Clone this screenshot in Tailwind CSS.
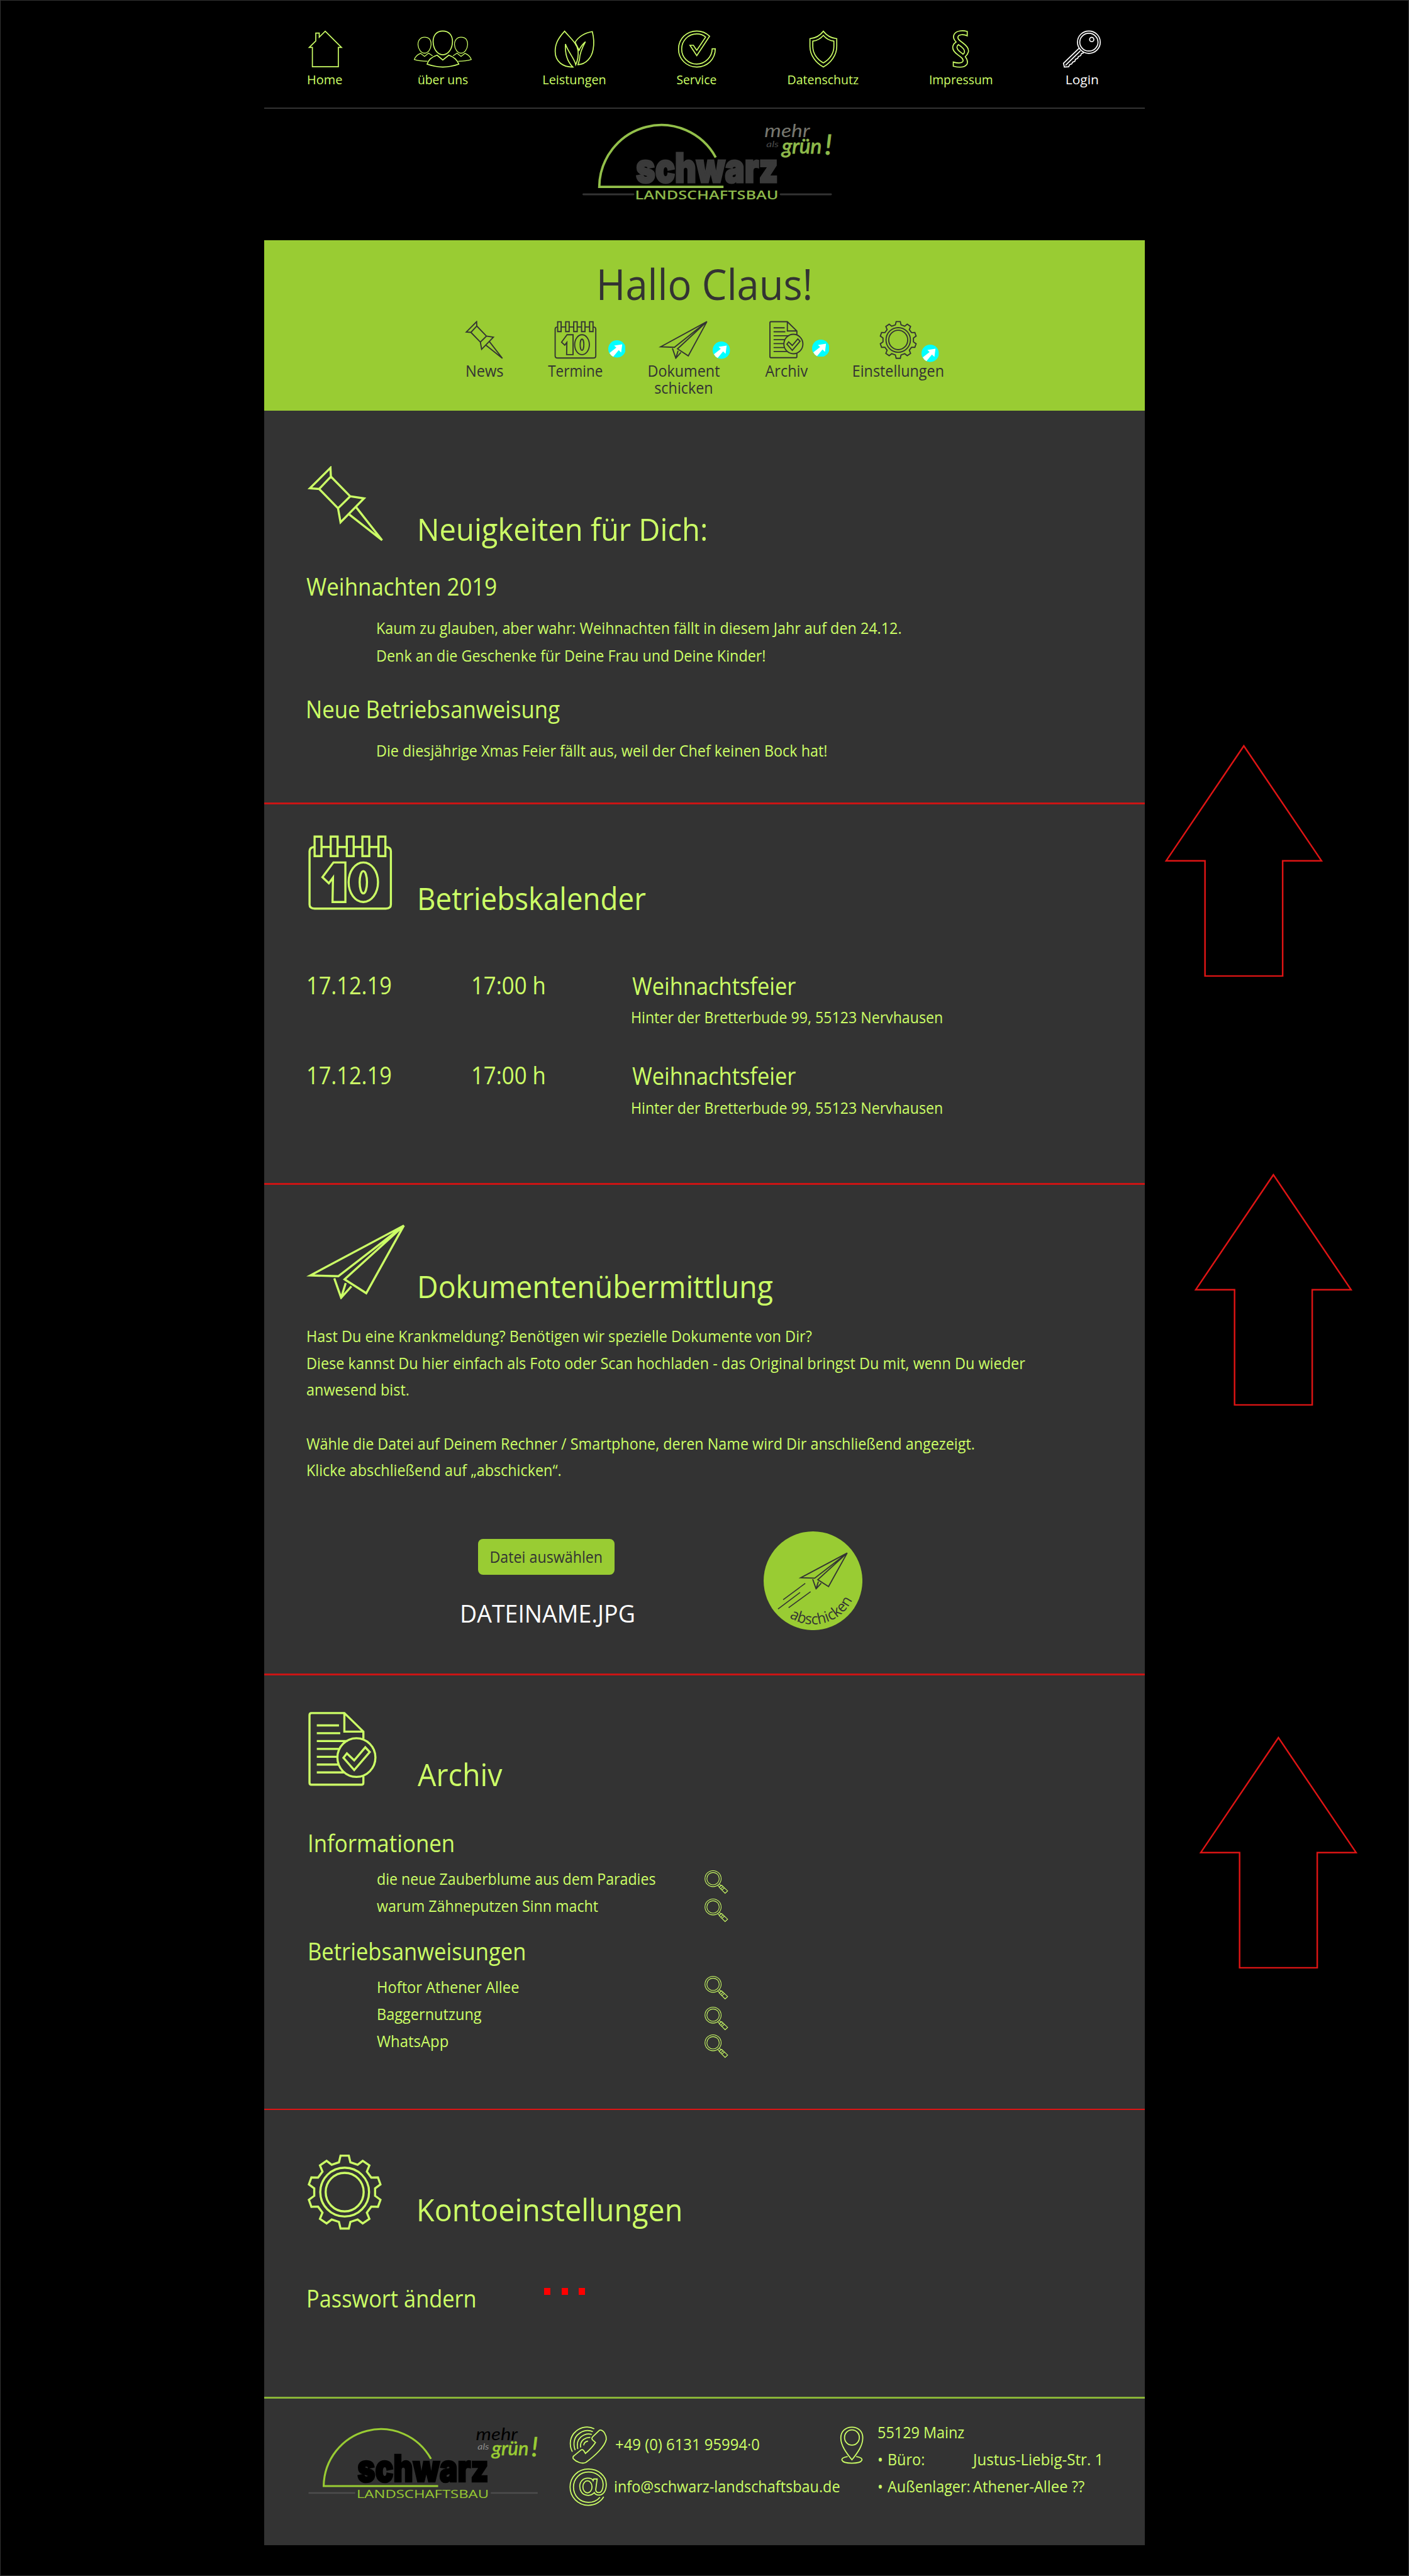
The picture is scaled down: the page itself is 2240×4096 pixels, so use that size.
<!DOCTYPE html>
<html lang="de">
<head>
<meta charset="utf-8">
<title>Schwarz Landschaftsbau – Mitarbeiterbereich</title>
<script src="https://cdn.jsdelivr.net/npm/@tailwindcss/browser@4"></script>
</head>
<body class="bg-black overflow-hidden">

<!-- Icon sprite -->
<svg class="hidden">
  <defs>
    <symbol id="pin" viewBox="108 80 185 330" preserveAspectRatio="none">
      <path vector-effect="non-scaling-stroke" d="M164 88 L165 126 L137 180 L115 177 Z M165 126 L211 212 L182 264 L137 180 M211 212 L244 221 L188 325 L182 264 M225 259 L287 403 L208 290"/>
    </symbol>
    <symbol id="calendar" viewBox="98 154 191 301" preserveAspectRatio="none">
      <path vector-effect="non-scaling-stroke" d="M115 203 Q105 205 105 220 V430 Q105 446 116 446 H271 Q282 446 282 430 V220 Q282 205 272 203 M116 162 H131 V239 H116 Z M151 162 H166 V239 H151 Z M186 162 H201 V239 H186 Z M220 162 H235 V239 H220 Z M255 162 H270 V239 H255 Z M131 203 H151 M166 203 H186 M201 203 H220 M235 203 H255"/>
      <path vector-effect="non-scaling-stroke" d="M157 264 H183 V420 H155 L156 324 L147 346 L133 322 Z"/>
      <ellipse vector-effect="non-scaling-stroke" cx="222" cy="342" rx="32" ry="78"/>
      <ellipse vector-effect="non-scaling-stroke" cx="222" cy="342" rx="8" ry="44"/>
    </symbol>
    <symbol id="plane" viewBox="78 212 178 366" preserveAspectRatio="none">
      <path vector-effect="non-scaling-stroke" d="M249 220 L85 461 L134 465 Z M249 220 L145 480 L183 547 Z M127 475 L139 569 L157 514 M147 498 L139 569"/>
    </symbol>
    <symbol id="doc" viewBox="144 179 223 292" preserveAspectRatio="none">
      <path vector-effect="non-scaling-stroke" d="M322 284 V257 L262 186 H158 Q152 186 152 194 V452 Q152 460 158 460 H316 Q322 460 322 452 V428 M262 186 V257 H322 M175 233 H245 M175 263 H249 M175 293 H272 M175 323 H245 M175 353 H239 M175 383 H243 M175 413 H262"/>
      <ellipse vector-effect="non-scaling-stroke" cx="300" cy="356" rx="60" ry="74"/>
      <path vector-effect="non-scaling-stroke" d="M259 357 L270 340 L293 367 L328 317 L342 335 L293 404 Z"/>
    </symbol>
    <symbol id="gear" viewBox="144 264 238 368" preserveAspectRatio="none">
      <path vector-effect="non-scaling-stroke" d="M276 272 L281 304 L304 316 L320 297 L341 319 L333 349 L347 378 L368 377 L376 411 L359 430 V466 L376 485 L368 519 L347 518 L333 547 L341 577 L320 599 L304 580 L281 592 L276 624 H250 L245 592 L222 580 L206 599 L185 577 L193 547 L179 518 L158 519 L150 485 L167 466 V430 L150 411 L158 377 L179 378 L193 349 L185 319 L206 297 L222 316 L245 304 L250 272 Z"/>
      <ellipse vector-effect="non-scaling-stroke" cx="263" cy="448" rx="77" ry="118"/>
      <ellipse vector-effect="non-scaling-stroke" cx="263" cy="448" rx="60" ry="93"/>
    </symbol>
    <symbol id="search" viewBox="1396 786 79 94" preserveAspectRatio="none">
      <ellipse vector-effect="non-scaling-stroke" cx="1425" cy="820" rx="25.5" ry="30.5"/>
      <ellipse vector-effect="non-scaling-stroke" cx="1425" cy="820" rx="19.5" ry="23.5"/>
      <path vector-effect="non-scaling-stroke" d="M1440 846 L1446 853 M1445 841 L1451 848 M1444 853 L1452 845 L1471 867 L1463 876 Z M1449 859 L1456 851 M1453 864 L1460 856"/>
    </symbol>
    <symbol id="badge" viewBox="0 0 28 28">
      <circle cx="14" cy="14" r="14" fill="#00ffff"/>
      <path d="M22.500 6.500 L9.500 8.500 L13 12 L2 20.500 Q4 24.500 8 26.500 L16.800 16 L20.800 19.800 Z" fill="#fff"/>
    </symbol>
    <symbol id="up" viewBox="0 0 256 376">
      <path d="M128 3 L3 188 H65.500 V373.500 H190.500 V188 H253 Z" fill="none" stroke="#dd1414" stroke-width="2.500"/>
    </symbol>
  </defs>
</svg>

<div class="relative w-[2268px] h-[4147px] [zoom:0.98765] border border-[#333333] bg-black overflow-hidden font-['Open_Sans',sans-serif] text-[#ccff66]">

  <div class="ml-[424px] w-[1418px]">

    <!-- Main navigation -->
    <nav class="h-[172px] pt-[47px] pl-[70.500px] flex items-start gap-[115.200px] whitespace-nowrap text-[21px] leading-[30px]">
      <a class="w-[55px] flex flex-col items-center">
        <svg class="w-[58.800px] h-[62.300px] shrink-0 fill-none stroke-current stroke-[1.700]" viewBox="160 144 128 187" preserveAspectRatio="none"><path vector-effect="non-scaling-stroke" d="M224 152 L281 230 H270 V324 H179 V230 H168 L191 199 V161 H203 V181 Z"/></svg>
        <span class="mt-[2.700px] scale-x-[.963]">Home</span>
      </a>
      <a class="w-[94px] flex flex-col items-center">
        <svg class="w-[99.600px] h-[62.300px] shrink-0 fill-none stroke-current stroke-[1.700]" viewBox="530 144 217 187" preserveAspectRatio="none"><path vector-effect="non-scaling-stroke" d="M638 151 C660 151 672 172 672 203 C671 238 657 266 638 266 C619 266 605 238 604 203 C604 172 616 151 638 151Z M618 268 Q590 280 583 311 Q610 324 638 325 Q668 324 694 311 Q685 280 659 268 L638 291 Z"/><path vector-effect="non-scaling-stroke" stroke-width="1.300" d="M574 181 C589 181 597 195 597 217 C596 240 586 258 574 258 C562 258 552 240 551 217 C551 195 560 181 574 181Z M702 181 C717 181 725 195 725 217 C724 240 714 258 702 258 C690 258 680 240 679 217 C679 195 688 181 702 181Z M584 297 Q556 297 538 289 Q543 268 560 259 L574 274 L588 258 L602 271 M692 297 Q720 297 738 289 Q733 268 716 259 L702 274 L688 258 L674 271"/></svg>
        <span class="mt-[3.500px] scale-x-[.931]">über uns</span>
      </a>
      <a class="w-[99.600px] flex flex-col items-center">
        <svg class="w-[69.800px] h-[62.300px] shrink-0 fill-none stroke-current stroke-[1.700]" viewBox="1024 144 152 187" preserveAspectRatio="none"><path vector-effect="non-scaling-stroke" d="M1065 152 C1040 190 1032 215 1032 250 C1032 300 1060 326 1094 325 C1075 300 1066 260 1068 214 C1076 250 1100 285 1104 314 C1112 290 1114 270 1112 245 C1108 210 1085 185 1065 152Z M1162 154 C1135 160 1112 180 1102 206 L1116 244 C1120 230 1128 215 1138 203 C1125 235 1118 260 1117 290 L1112 314 C1140 312 1160 280 1165 240 C1169 210 1168 185 1162 154Z"/></svg>
        <span class="mt-[2.700px] scale-x-[.957]">Leistungen</span>
      </a>
      <a class="w-[63.500px] flex flex-col items-center">
        <svg class="w-[64.700px] h-[62.300px] shrink-0 fill-none stroke-current stroke-[1.700]" viewBox="1457 144 141 187" preserveAspectRatio="none"><path vector-effect="non-scaling-stroke" d="M1592 237 C1592 290 1562 325 1527 325 C1490 325 1463 285 1463 238 C1463 190 1490 151 1527 151 C1545 151 1560 160 1572 176 L1527 270 L1503 220 H1515 L1527 244 L1558 180 C1549 169 1538 165 1527 165 C1497 165 1474 198 1474 238 C1474 278 1497 311 1527 311 C1557 311 1581 275 1581 237 Z"/></svg>
        <span class="mt-[3.500px] scale-x-[.930]">Service</span>
      </a>
      <a class="w-[113px] flex flex-col items-center">
        <svg class="w-[50.500px] h-[62.300px] shrink-0 fill-none stroke-current stroke-[1.700]" viewBox="370 144 110 187" preserveAspectRatio="none"><path vector-effect="non-scaling-stroke" d="M425 152 C415 170 398 186 378 188 V225 C378 270 400 305 425 325 C450 305 472 270 472 225 V188 C452 186 435 170 425 152Z M425 172 C415 188 402 198 388 200 V225 C388 262 405 290 425 305 C445 290 462 262 462 225 V200 C448 198 435 188 425 172Z"/></svg>
        <span class="mt-[3.500px] scale-x-[.942]">Datenschutz</span>
      </a>
      <a class="w-[100px] flex flex-col items-center">
        <svg class="w-[33px] h-[62.300px] shrink-0 fill-none stroke-current stroke-[1.700]" viewBox="870 144 72 187" preserveAspectRatio="none"><path vector-effect="non-scaling-stroke" d="M929 153 V174 C915 165 898 168 896 180 C895 192 905 200 915 210 C930 225 935 240 933 252 C931 262 927 270 922 275 C930 290 932 300 928 312 C920 327 900 328 880 321 V301 C895 308 910 307 914 297 C917 285 905 276 896 266 C880 250 876 235 879 222 C881 213 885 208 890 204 C880 190 878 178 884 165 C892 149 912 147 929 153Z M898 217 C890 224 892 238 900 247 C905 254 912 260 914 263 C921 258 921 245 915 236 C910 228 903 221 898 217Z"/></svg>
        <span class="mt-[2.700px] scale-x-[.929]">Impressum</span>
      </a>
      <a class="w-[60px] flex flex-col items-center text-white">
        <svg class="w-[65.200px] h-[62.300px] shrink-0 fill-none stroke-current stroke-[1.700]" viewBox="1262 144 142 187" preserveAspectRatio="none"><ellipse vector-effect="non-scaling-stroke" cx="1357" cy="205" rx="40" ry="54"/><ellipse vector-effect="non-scaling-stroke" cx="1357" cy="205" rx="32" ry="43"/><ellipse vector-effect="non-scaling-stroke" cx="1367" cy="192" rx="7.500" ry="10.500"/><path vector-effect="non-scaling-stroke" d="M1323 234 L1268 307 L1271 325 L1286 324 L1290 313 L1297 310 L1300 302 L1308 297 L1310 288 L1318 283 L1320 275 L1328 270 L1331 260 L1339 256 M1327 247 L1275 317"/></svg>
        <span class="mt-[2.700px] scale-x-[1.010]">Login</span>
      </a>
    </nav>
    <div class="h-[2.600px] bg-[#333333]"></div>

    <!-- Logo on black -->
    <div class="h-[211.400px] pt-[20.400px] pl-[513px]">
      <svg class="w-[402px] h-[127px] overflow-visible" viewBox="937 196 402 127">
        <path d="M1151.500 253 A100 101 0 0 0 964 300.500 H1164" fill="none" stroke="#93c04a" stroke-width="3.800"/>
        <text x="1023" y="293" font-family="Inter" font-weight="900" font-size="65" textLength="229" lengthAdjust="spacingAndGlyphs" fill="#3a3a3a" stroke="#3a3a3a" stroke-width="3">schwarz</text>
        <path d="M938.500 312.500 H1019 M1256 312.500 H1337" stroke="#333333" stroke-width="3" stroke-linecap="round"/>
        <text x="1021.500" y="321" font-family="Open Sans" font-weight="600" font-size="20" textLength="231" lengthAdjust="spacingAndGlyphs" fill="#8db94a">LANDSCHAFTSBAU</text>
        <g font-family="Lato" font-style="italic">
          <text x="1230" y="220.500" font-size="29" textLength="73" lengthAdjust="spacingAndGlyphs" fill="#77776f">mehr</text>
          <text x="1233" y="236.500" font-size="14" textLength="20" lengthAdjust="spacingAndGlyphs" fill="#4a4a4a">als</text>
          <text x="1258" y="247" font-size="34" textLength="64" lengthAdjust="spacingAndGlyphs" fill="#8db94a" stroke="#8db94a" stroke-width="1">grün</text>
          <text x="1327" y="249" font-size="46" fill="#8db94a" stroke="#8db94a" stroke-width="1">!</text>
        </g>
      </svg>
    </div>

    <!-- Greeting band -->
    <header class="h-[273.700px] bg-[#99cc33] text-[#333333] pt-[30px] whitespace-nowrap">
      <h1 class="text-[68px] leading-[80px] text-center"><span class="inline-block scale-x-[.941]">Hallo Claus!</span></h1>
      <div class="pt-[19px] pl-[325.500px] flex items-start gap-[73.800px] text-[25.500px] leading-[26.600px]">
        <a class="w-[58.500px] flex flex-col items-center">
          <svg class="w-[62.500px] h-[61.800px] shrink-0 fill-none stroke-current stroke-[1.900]"><use href="#pin"/></svg>
          <span class="mt-[5.700px] scale-x-[.939]">News</span>
        </a>
        <a class="relative w-[87px] flex flex-col items-center">
          <svg class="w-[70.600px] h-[61.800px] shrink-0 fill-none stroke-current stroke-[1.900]"><use href="#calendar"/></svg>
          <span class="mt-[5.700px] scale-x-[.893]">Termine</span>
          <svg class="absolute left-[96px] top-[32px] size-[28px]"><use href="#badge"/></svg>
        </a>
        <a class="relative w-[114.600px] flex flex-col items-center text-center">
          <svg class="w-[81px] h-[61.800px] shrink-0 fill-none stroke-current stroke-[1.900]"><use href="#plane"/></svg>
          <span class="mt-[5.700px] scale-x-[.928]">Dokument<br>schicken</span>
          <svg class="absolute left-[103.500px] top-[34px] size-[28px]"><use href="#badge"/></svg>
        </a>
        <a class="relative w-[68px] flex flex-col items-center">
          <svg class="w-[56.900px] h-[61.800px] shrink-0 fill-none stroke-current stroke-[1.900]"><use href="#doc"/></svg>
          <span class="mt-[5.700px] scale-x-[.930]">Archiv</span>
          <svg class="absolute left-[75px] top-[30.500px] size-[28px]"><use href="#badge"/></svg>
        </a>
        <a class="relative w-[144.700px] flex flex-col items-center">
          <svg class="w-[60.700px] h-[61.800px] shrink-0 fill-none stroke-current stroke-[1.900]"><use href="#gear"/></svg>
          <span class="mt-[5.700px] scale-x-[.927]">Einstellungen</span>
          <svg class="absolute left-[109.500px] top-[39px] size-[28px]"><use href="#badge"/></svg>
        </a>
      </div>
    </header>

    <main class="bg-[#333333] whitespace-nowrap">
      <!-- News -->
      <section class="h-[631.300px] pt-[89.300px]">
        <div class="h-[122px] pl-[69px] flex items-start">
          <svg class="w-[125px] h-[122px] fill-none stroke-current stroke-[3.400]"><use href="#pin"/></svg>
          <h2 class="ml-[52px] mt-[70.800px] text-[50px] leading-[60px] origin-left scale-x-[.955]">Neuigkeiten für Dich:</h2>
        </div>
        <h3 class="pl-[68px] mt-[47.500px] text-[38.500px] leading-[50px]"><span class="inline-block origin-left scale-x-[.918]">Weihnachten 2019</span></h3>
        <p class="pl-[180px] mt-[18.600px] text-[25.500px] leading-[45px]"><span class="inline-block origin-left scale-x-[.928]">Kaum zu glauben, aber wahr: Weihnachten fällt in diesem Jahr auf den 24.12.<br>Denk an die Geschenke für Deine Frau und Deine Kinder!</span></p>
        <h3 class="pl-[67.500px] mt-[38.500px] text-[38.500px] leading-[50px]"><span class="inline-block origin-left scale-x-[.914]">Neue Betriebsanweisung</span></h3>
        <p class="pl-[180px] mt-[19px] text-[25.500px] leading-[45px]"><span class="inline-block origin-left scale-x-[.928]">Die diesjährige Xmas Feier fällt aus, weil der Chef keinen Bock hat!</span></p>
      </section>
      <div class="h-[3px] bg-[#cc1414]"></div>

      <!-- Calendar -->
      <section class="h-[610px] pt-[48.500px]">
        <div class="h-[122.600px] pl-[68.500px] flex items-start">
          <svg class="w-[141.300px] h-[122.900px] fill-none stroke-current stroke-[3.400]"><use href="#calendar"/></svg>
          <h2 class="ml-[36.200px] mt-[72.100px] text-[50px] leading-[60px] origin-left scale-x-[.925]">Betriebskalender</h2>
        </div>
        <div class="mt-[95px] pl-[68.200px] grid grid-cols-[264.800px_258px_auto] auto-rows-[145px] text-[38.500px] leading-[50px]">
          <div><span class="inline-block origin-left scale-x-[.903]">17.12.19</span></div>
          <div><span class="inline-block origin-left scale-x-[.914]">17:00 h</span></div>
          <div>
            <div class="pl-[1.500px] pt-[.800px]"><span class="inline-block origin-left scale-x-[.905]">Weihnachtsfeier</span></div>
            <p class="mt-[4.600px] text-[25.500px] leading-[43px]"><span class="inline-block origin-left scale-x-[.920]">Hinter der Bretterbude 99, 55123 Nervhausen</span></p>
          </div>
          <div><span class="inline-block origin-left scale-x-[.903]">17.12.19</span></div>
          <div><span class="inline-block origin-left scale-x-[.914]">17:00 h</span></div>
          <div>
            <div class="pl-[1.500px] pt-[.800px]"><span class="inline-block origin-left scale-x-[.905]">Weihnachtsfeier</span></div>
            <p class="mt-[4.600px] text-[25.500px] leading-[43px]"><span class="inline-block origin-left scale-x-[.920]">Hinter der Bretterbude 99, 55123 Nervhausen</span></p>
          </div>
        </div>
      </section>
      <div class="h-[3px] bg-[#cc1414]"></div>

      <!-- Document upload -->
      <section class="h-[786.500px] pt-[62.300px]">
        <div class="h-[122.600px] pl-[67.600px] flex items-start">
          <svg class="w-[163.500px] h-[122px] fill-none stroke-current stroke-[3.400]"><use href="#plane"/></svg>
          <h2 class="ml-[14.900px] mt-[70.300px] text-[50px] leading-[60px] origin-left scale-x-[.939]">Dokumentenübermittlung</h2>
        </div>
        <div class="pl-[68.500px] mt-[36.600px] text-[25.500px] leading-[43.200px]">
          <p><span class="inline-block origin-left scale-x-[.932]">Hast Du eine Krankmeldung? Benötigen wir spezielle Dokumente von Dir?<br>Diese kannst Du hier einfach als Foto oder Scan hochladen - das Original bringst Du mit, wenn Du wieder<br>anwesend bist.</span></p>
          <p class="mt-[43.200px]"><span class="inline-block origin-left scale-x-[.928]">Wähle die Datei auf Deinem Rechner / Smartphone, deren Name wird Dir anschließend angezeigt.<br>Klicke abschließend auf „abschicken“.</span></p>
        </div>
        <div class="mt-[77px] pl-[304.500px] flex items-start">
          <div class="w-[300px] pt-[12.300px] flex flex-col items-center">
            <button class="w-[220px] h-[57px] rounded-[8px] bg-[#99cc33] text-[#333333] text-[25.500px] leading-[57px]"><span class="inline-block scale-x-[.924]">Datei auswählen</span></button>
            <div class="ml-[3px] mt-[37.500px] text-white text-[38.500px] leading-[50px]"><span class="inline-block scale-x-[.985]">DATEINAME.JPG</span></div>
          </div>
          <svg class="ml-[199.300px] size-[159px]" viewBox="0 0 159 159">
            <circle cx="79.500" cy="79.500" r="79.500" fill="#99cc33"/>
            <svg x="56.700" y="33.500" width="81" height="60.500" fill="none" stroke="#333333" stroke-width="1.900"><use href="#plane"/></svg>
            <path d="M31.500 110 L67 83.600 M23.200 125 L58.700 98.300 M40.200 123 L75.600 97" stroke="#333333" stroke-width="1.600"/>
            <path id="curve" d="M41.500 138.500 A70.500 70.500 0 0 0 146.500 101.500" fill="none"/>
            <text font-size="24" fill="#333333"><textPath href="#curve" textLength="118.500" lengthAdjust="spacingAndGlyphs">abschicken</textPath></text>
          </svg>
        </div>
      </section>
      <div class="h-[3px] bg-[#cc1414]"></div>

      <!-- Archive -->
      <section class="h-[697px] pt-[57.400px]">
        <div class="h-[122.600px] pl-[69px] flex items-start">
          <svg class="w-[113.800px] h-[122.900px] fill-none stroke-current stroke-[3.400]"><use href="#doc"/></svg>
          <h2 class="ml-[64.200px] mt-[71.200px] text-[50px] leading-[60px] origin-left scale-x-[.945]">Archiv</h2>
        </div>
        <h3 class="pl-[70.500px] mt-[64.900px] text-[38.500px] leading-[50px]"><span class="inline-block origin-left scale-x-[.917]">Informationen</span></h3>
        <ul class="pl-[181.500px] mt-[10.500px] text-[25.500px] leading-[43px]">
          <li class="h-[43px] flex items-start">
            <div class="w-[526.700px]"><span class="inline-block origin-left scale-x-[.921]">die neue Zauberblume aus dem Paradies</span></div>
            <svg class="mt-[7.300px] w-[40.300px] h-[39.600px] fill-none stroke-current stroke-[1.100]"><use href="#search"/></svg>
          </li>
          <li class="h-[43px] flex items-start">
            <div class="w-[526.700px] pt-[.500px]"><span class="inline-block origin-left scale-x-[.923]">warum Zähneputzen Sinn macht</span></div>
            <svg class="mt-[9.900px] w-[40.300px] h-[39.600px] fill-none stroke-current stroke-[1.100]"><use href="#search"/></svg>
          </li>
        </ul>
        <h3 class="pl-[70.500px] mt-[28.100px] text-[38.500px] leading-[50px]"><span class="inline-block origin-left scale-x-[.909]">Betriebsanweisungen</span></h3>
        <ul class="pl-[181.500px] mt-[10.500px] text-[25.500px] leading-[43.400px]">
          <li class="h-[43.400px] flex items-start">
            <div class="w-[526.700px]"><span class="inline-block origin-left scale-x-[.940]">Hoftor Athener Allee</span></div>
            <svg class="mt-[3.300px] w-[40.300px] h-[39.600px] fill-none stroke-current stroke-[1.100]"><use href="#search"/></svg>
          </li>
          <li class="h-[43.400px] flex items-start">
            <div class="w-[526.700px]"><span class="inline-block origin-left scale-x-[.935]">Baggernutzung</span></div>
            <svg class="mt-[9.100px] w-[40.300px] h-[39.600px] fill-none stroke-current stroke-[1.100]"><use href="#search"/></svg>
          </li>
          <li class="h-[43.400px] flex items-start">
            <div class="w-[526.700px]"><span class="inline-block origin-left scale-x-[.950]">WhatsApp</span></div>
            <svg class="mt-[10.300px] w-[40.300px] h-[39.600px] fill-none stroke-current stroke-[1.100]"><use href="#search"/></svg>
          </li>
        </ul>
      </section>
      <div class="h-[3px] bg-[#dd1414]"></div>

      <!-- Account settings -->
      <section class="h-[461px] pt-[70px]">
        <div class="h-[122.600px] pl-[69px] flex items-start">
          <svg class="w-[121.400px] h-[122.700px] fill-none stroke-current stroke-[3.400]"><use href="#gear"/></svg>
          <h2 class="ml-[55.200px] mt-[59.600px] text-[50px] leading-[60px] origin-left scale-x-[.947]">Kontoeinstellungen</h2>
        </div>
        <div class="mt-[85.300px] pl-[68.500px] flex items-start text-[38.500px] leading-[50px]">
          <h3 class="w-[382.500px]"><span class="inline-block origin-left scale-x-[.904]">Passwort ändern</span></h3>
          <div class="mt-[8.200px] flex gap-[18px]">
            <span class="w-[10px] h-[11px] bg-[#ff0000]"></span>
            <span class="w-[10px] h-[11px] bg-[#ff0000]"></span>
            <span class="w-[10px] h-[11px] bg-[#ff0000]"></span>
          </div>
        </div>
      </section>
      <div class="h-[3px] bg-[#8ab637]"></div>

      <!-- Footer -->
      <footer class="h-[235.700px] flex items-start text-[25.500px] leading-[43.500px]">
        <svg class="ml-[71px] mt-[45px] w-[370.400px] h-[117px] shrink-0 overflow-visible" viewBox="937 196 402 127">
          <path d="M1151.500 253 A100 101 0 0 0 964 300.500 H1164" fill="none" stroke="#99cc33" stroke-width="3.400"/>
          <text x="1023" y="293" font-family="Inter" font-weight="900" font-size="65" textLength="229" lengthAdjust="spacingAndGlyphs" fill="#000" stroke="#000" stroke-width="3">schwarz</text>
          <path d="M937.500 312.500 H1019 M1256 312.500 H1338" stroke="#4d4d4d" stroke-width="3"/>
          <text x="1021.500" y="321" font-family="Open Sans" font-weight="500" font-size="20" textLength="231" lengthAdjust="spacingAndGlyphs" fill="#99cc33">LANDSCHAFTSBAU</text>
          <g font-family="Lato" font-style="italic">
            <text x="1230" y="220.500" font-size="29" textLength="73" lengthAdjust="spacingAndGlyphs" fill="#000">mehr</text>
            <text x="1233" y="236.500" font-size="14" textLength="20" lengthAdjust="spacingAndGlyphs" fill="#8c8c8c">als</text>
            <text x="1258" y="247" font-size="34" textLength="64" lengthAdjust="spacingAndGlyphs" fill="#99cc33" stroke="#99cc33" stroke-width=".8">grün</text>
            <text x="1327" y="249" font-size="46" fill="#99cc33" stroke="#99cc33" stroke-width=".8">!</text>
          </g>
        </svg>
        <div class="ml-[48.500px] mt-[44.300px] w-[437px] shrink-0">
          <div class="h-[67px] flex items-start">
            <svg class="w-[62.900px] h-[62.300px] shrink-0 fill-none stroke-current stroke-[1.800]" viewBox="1078 199 137 187" preserveAspectRatio="none"><path vector-effect="non-scaling-stroke" d="M1190 220 C1201 222 1211 245 1210 265 C1205 300 1170 345 1138 377 C1125 385 1105 375 1094 358 C1092 350 1093 347 1098 343 L1120 318 C1124 313 1128 315 1131 320 L1137 333 C1150 318 1160 305 1172 280 L1162 268 C1158 262 1160 256 1163 252 L1184 224 C1186 220 1188 219 1190 220Z M1091 325 C1078 290 1083 250 1103 227 C1122 203 1148 200 1168 214 M1101 317 C1092 285 1098 255 1112 240 C1128 220 1148 218 1163 228 M1110 312 C1106 288 1110 268 1120 255 C1132 240 1146 236 1159 241 M1120 304 C1118 285 1122 275 1130 266 C1138 258 1146 255 1154 256 M1131 294 C1131 285 1136 276 1146 273"/></svg>
            <div class="ml-[12px] mt-[7.500px]"><span class="inline-block origin-left scale-x-[.948]">+49 (0) 6131 95994·0</span></div>
          </div>
          <div class="flex items-start">
            <svg class="w-[62.900px] h-[62.300px] shrink-0 fill-none stroke-current stroke-[1.800]" viewBox="1078 400 137 187" preserveAspectRatio="none"><path vector-effect="non-scaling-stroke" d="M1201 540 C1190 565 1170 581 1147 581 C1110 581 1083 540 1083 493 C1083 445 1110 406 1147 406 C1183 406 1210 440 1210 480 C1210 510 1200 532 1184 532 C1174 532 1170 526 1168 520 C1160 532 1150 535 1140 532 C1125 528 1117 510 1117 490 C1117 465 1130 450 1145 450 C1155 450 1162 455 1164 462 L1166 454 H1178 L1173 505 C1173 515 1176 520 1184 520 C1194 520 1199 500 1199 480 C1199 445 1175 420 1147 420 C1118 420 1095 452 1095 493 C1095 535 1118 567 1147 567 C1163 567 1178 558 1188 542"/><ellipse vector-effect="non-scaling-stroke" cx="1144" cy="492" rx="16" ry="29"/></svg>
            <div class="ml-[10.800px] mt-[8.500px]"><span class="inline-block origin-left scale-x-[.931]">info@schwarz-landschaftsbau.de</span></div>
          </div>
        </div>
        <svg class="-ml-[1.600px] mt-[44.300px] w-[41.300px] h-[62.300px] shrink-0 fill-none stroke-current stroke-[1.800]" viewBox="480 199 90 187" preserveAspectRatio="none"><path vector-effect="non-scaling-stroke" d="M525 364 C505 330 486 295 486 258 C486 225 503 206 525 206 C547 206 563 225 563 258 C563 295 545 330 525 364Z M510 348 C480 353 482 380 525 380 C568 380 570 353 540 348"/><ellipse vector-effect="non-scaling-stroke" cx="525" cy="256" rx="26" ry="37"/></svg>
        <address class="ml-[21px] mt-[32.400px] not-italic grid grid-cols-[16px_138px_auto]">
          <div class="col-span-3"><span class="inline-block origin-left scale-x-[.930]">55129 Mainz</span></div>
          <div><span class="inline-block origin-left scale-x-[.930]">•</span></div>
          <div><span class="inline-block origin-left scale-x-[.930]">Büro:</span></div>
          <div><span class="inline-block origin-left scale-x-[.958]">Justus-Liebig-Str. 1</span></div>
          <div><span class="inline-block origin-left scale-x-[.930]">•</span></div>
          <div><span class="inline-block origin-left scale-x-[.930]">Außenlager:</span></div>
          <div><span class="inline-block origin-left scale-x-[.945]">Athener-Allee ??</span></div>
        </address>
      </footer>
    </main>
  </div>

  <!-- Annotation arrows beside the page -->
  <svg class="absolute left-[1873.500px] top-[1197px] w-[256px] h-[376px]"><use href="#up"/></svg>
  <svg class="absolute left-[1920.500px] top-[1887.500px] w-[256px] h-[376px]"><use href="#up"/></svg>
  <svg class="absolute left-[1929px] top-[2793.500px] w-[256px] h-[376px]"><use href="#up"/></svg>
</div>
</body>
</html>
